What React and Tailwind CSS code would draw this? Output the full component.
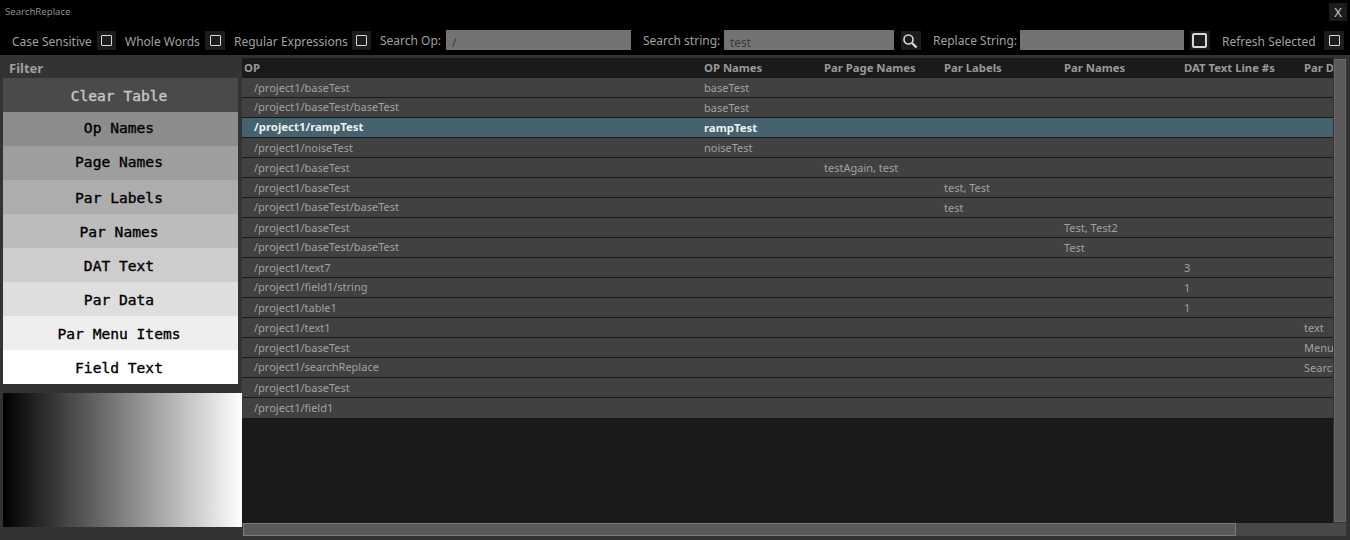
import React from 'react';

const sans = 'font-["Noto_Sans",sans-serif]';

const columns = [
  { name: 'OP', width: 'w-[460px]' },
  { name: 'OP Names', width: 'w-[120px]' },
  { name: 'Par Page Names', width: 'w-[120px]' },
  { name: 'Par Labels', width: 'w-[120px]' },
  { name: 'Par Names', width: 'w-[120px]' },
  { name: 'DAT Text Line #s', width: 'w-[120px]' },
  { name: 'Par Data', width: 'w-[120px]' },
];

// raised marks the rows whose path sits a pixel higher in the first column
const rows = [
  { cells: ['/project1/baseTest', 'baseTest', '', '', '', '', ''] },
  { cells: ['/project1/baseTest/baseTest', 'baseTest', '', '', '', '', ''], raised: true },
  { cells: ['/project1/rampTest', 'rampTest', '', '', '', '', ''], raised: true, selected: true },
  { cells: ['/project1/noiseTest', 'noiseTest', '', '', '', '', ''] },
  { cells: ['/project1/baseTest', '', 'testAgain, test', '', '', '', ''] },
  { cells: ['/project1/baseTest', '', '', 'test, Test', '', '', ''] },
  { cells: ['/project1/baseTest/baseTest', '', '', 'test', '', '', ''], raised: true },
  { cells: ['/project1/baseTest', '', '', '', 'Test, Test2', '', ''] },
  { cells: ['/project1/baseTest/baseTest', '', '', '', 'Test', '', ''], raised: true },
  { cells: ['/project1/text7', '', '', '', '', '3', ''] },
  { cells: ['/project1/field1/string', '', '', '', '', '1', ''], raised: true },
  { cells: ['/project1/table1', '', '', '', '', '1', ''] },
  { cells: ['/project1/text1', '', '', '', '', '', 'text'] },
  { cells: ['/project1/baseTest', '', '', '', '', '', 'Menu'] },
  { cells: ['/project1/searchReplace', '', '', '', '', '', 'Search'], raised: true },
  { cells: ['/project1/baseTest', '', '', '', '', '', ''] },
  { cells: ['/project1/field1', '', '', '', '', '', ''] },
];

const filters = [
  { label: 'Clear Table', cls: 'bg-[#4a4a4a] text-[#c8c8c8] pt-[2px]' },
  { label: 'Op Names', cls: 'bg-[#8c8c8c] text-black pb-[2px]' },
  { label: 'Page Names', cls: 'bg-[#9e9e9e] text-black pb-[2px]' },
  { label: 'Par Labels', cls: 'bg-[#adadad] text-black pt-[2px]' },
  { label: 'Par Names', cls: 'bg-[#bcbcbc] text-black pt-[2px]' },
  { label: 'DAT Text', cls: 'bg-[#cdcdcd] text-black pt-[2px]' },
  { label: 'Par Data', cls: 'bg-[#dedede] text-black pt-[2px]' },
  { label: 'Par Menu Items', cls: 'bg-[#eeeeee] text-black pt-[2px]' },
  { label: 'Field Text', cls: 'bg-white text-black pt-[2px]' },
];

const Check = ({ big, wide }) => (
  <div className={`${wide ? 'w-[20px]' : 'w-[19px]'} h-[19px] mt-[3px] bg-[#1c1c1c] flex items-center justify-center shrink-0`}>
    <div className={big ? 'w-[15px] h-[15px] mr-[1px] border-2 border-[#d8d8d8] rounded-[2px]' : 'w-[11px] h-[11px] border border-[#d8d8d8] rounded-[1px]'}></div>
  </div>
);

const Field = ({ width, value }) => (
  <div className={`${width} h-[20px] mt-[2px] bg-[#737373] text-[#3c3c3c] text-[12px] leading-[26px] pl-[6px] shrink-0`}>{value}</div>
);

export default function App() {
  return (
    <div className={`w-[1350px] h-[540px] bg-[#333333] overflow-hidden flex flex-col ${sans}`}>
      <div className="h-[28px] bg-black flex items-start justify-between pr-[3px] pl-[5px] shrink-0">
        <span className="text-[9.6px] leading-[23px] text-[#8a8a8a]">SearchReplace</span>
        <div className="mt-[3px] w-[18px] h-[18px] bg-[#1c1c1c] text-[#c8c8c8] text-[13px] leading-[19px] text-center">X</div>
      </div>
      <div className="h-[27px] bg-black flex items-start pl-[12px] text-[12px] text-[#a0a0a0] whitespace-nowrap shrink-0">
        <span className="w-[85px] leading-[28px]">Case Sensitive</span>
        <Check />
        <span className="ml-[9px] w-[80px] leading-[28px]">Whole Words</span>
        <Check wide />
        <span className="ml-[9px] w-[118px] leading-[28px]">Regular Expressions</span>
        <Check />
        <span className="ml-[9px] w-[66px] leading-[26px]">Search Op:</span>
        <Field width="w-[185px]" value="/" />
        <span className="ml-[12px] w-[81px] leading-[26px]">Search string:</span>
        <Field width="w-[170px]" value="test" />
        <div className="mt-[3px] ml-[7px] w-[20px] h-[19px] pr-[2px] bg-[#1c1c1c] flex items-center justify-center">
          <svg width="16" height="16" viewBox="0 0 16 16" fill="none" stroke="#d8d8d8">
            <circle cx="6.5" cy="6.5" r="4.5" strokeWidth="1.6" />
            <path d="M10 10l4.5 4.5" strokeWidth="2.4" />
          </svg>
        </div>
        <span className="ml-[12px] w-[87px] leading-[26px]">Replace String:</span>
        <Field width="w-[164px]" value="" />
        <div className="ml-[6px]"><Check big wide /></div>
        <span className="ml-[12px] w-[102px] leading-[28px]">Refresh Selected</span>
        <Check wide />
      </div>
      <div className="flex-1 flex min-h-0">
        <div className="w-[242px] pl-[3px] shrink-0 flex flex-col">
          <div className="h-[23px] pl-[6px] pt-[3px] text-[13px] leading-[20px] font-bold text-[#a0a0a0]">Filter</div>
          <div className="w-[235px] flex flex-col">
            {filters.map((f) => (
              <div
                key={f.label}
                className={`h-[34px] pr-[3px] flex items-center justify-center font-["DejaVu_Sans_Mono",monospace] text-[14.6px] [-webkit-text-stroke:0.35px] ${f.cls}`}
              >
                {f.label}
              </div>
            ))}
          </div>
          <div className="mt-[9px] h-[134px] w-[239px] bg-linear-to-r/srgb from-black to-white"></div>
        </div>
        <div className="flex-1 flex flex-col min-w-0 pt-[3px] pr-[4px] pb-[4px]">
          <div className="flex-1 flex min-h-0">
            <div className="w-[1091px] bg-[#1a1a1a] overflow-hidden">
              <div className="h-[20px] flex text-[11.3px] leading-[20px] font-bold text-[#999999] whitespace-nowrap">
                {columns.map((c) => (
                  <div key={c.name} className={`${c.width} pl-[2px] shrink-0`}>{c.name}</div>
                ))}
              </div>
              {rows.map((r, i) => (
                <div
                  key={i}
                  className={`h-[20px] flex leading-[19px] whitespace-nowrap ${i < rows.length - 1 ? 'border-b border-[#1a1a1a]' : ''} ${r.selected ? 'bg-[#45626f] text-[#f0f0f0] font-bold text-[11.4px]' : 'bg-[#414141] text-[#a0a0a0] text-[11px]'}`}
                >
                  {r.cells.map((cell, j) => (
                    <div
                      key={j}
                      className={`${columns[j].width} shrink-0 overflow-hidden ${j === 0 ? 'pl-[12px]' : 'pl-[2px]'} ${j === 0 && r.raised ? 'leading-[17px]' : ''}`}
                    >
                      {cell}
                    </div>
                  ))}
                </div>
              ))}
            </div>
            <div className="w-[13px] pl-[1px] py-[1px] shrink-0">
              <div className="h-full bg-[#5a5a5a] border border-[#676767]"></div>
            </div>
          </div>
          <div className="h-[13px] ml-[1px] bg-[#484848] flex">
            <div className="w-[993px] bg-[#5a5a5a] border border-[#7c7c7c]"></div>
          </div>
        </div>
      </div>
    </div>
  );
}
